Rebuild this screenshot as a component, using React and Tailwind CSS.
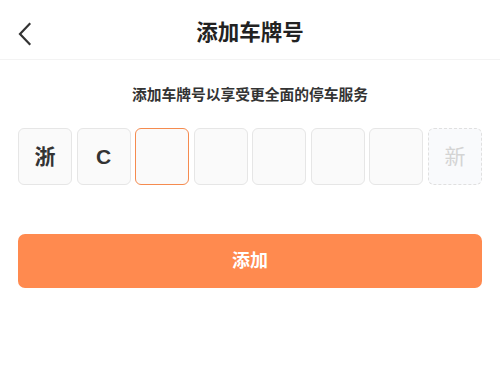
export default function App() {
  const chars = ["浙", "C", "", "", "", "", ""];
  return (
    <div
      className="w-[500px] h-[385px] bg-white text-[#333]"
      style={{ fontFamily: '"Liberation Sans", "Noto Sans CJK SC", sans-serif' }}
    >
      <div className="relative h-[60px] flex items-center justify-center border-b border-[#f3f3f3]">
        <div className="absolute left-[17px] top-[22px]">
          <svg width="16" height="24" viewBox="0 0 16 24" fill="none">
            <path d="M12.5 2 L3 12 L12.5 22" stroke="#333" strokeWidth="2.2" strokeLinecap="square" strokeLinejoin="miter" />
          </svg>
        </div>
        <div className="text-[21.5px] font-bold leading-none text-[#222] mt-[8px]">添加车牌号</div>
      </div>
      <div className="pt-[24px] text-center text-[14.75px] font-bold leading-[22px] text-[#333]">
        添加车牌号以享受更全面的停车服务
      </div>
      <div className="mx-[18px] mt-[22px] grid grid-cols-8 gap-[4.5px]">
        {chars.map((c, i) => (
          <div
            key={i}
            className={
              "h-[57px] rounded-[6px] flex items-center justify-center text-[21px] font-bold bg-[#fafafa] " +
              (i === 2 ? "border-[1.5px] border-[#f58b4f]" : "border border-[#e6e6e6]")
            }
          >
            {c}
          </div>
        ))}
        <div className="h-[57px] rounded-[6px] flex items-center justify-center text-[21px] bg-[#f9fafc] border border-dashed border-[#e0e0e0] text-[#d4d4d4]">
          新
        </div>
      </div>
      <div className="mx-[18px] mt-[49px] h-[54px] rounded-[7px] bg-[#ff8a4f] flex items-center justify-center text-white text-[18px] font-bold">
        添加
      </div>
    </div>
  );
}
